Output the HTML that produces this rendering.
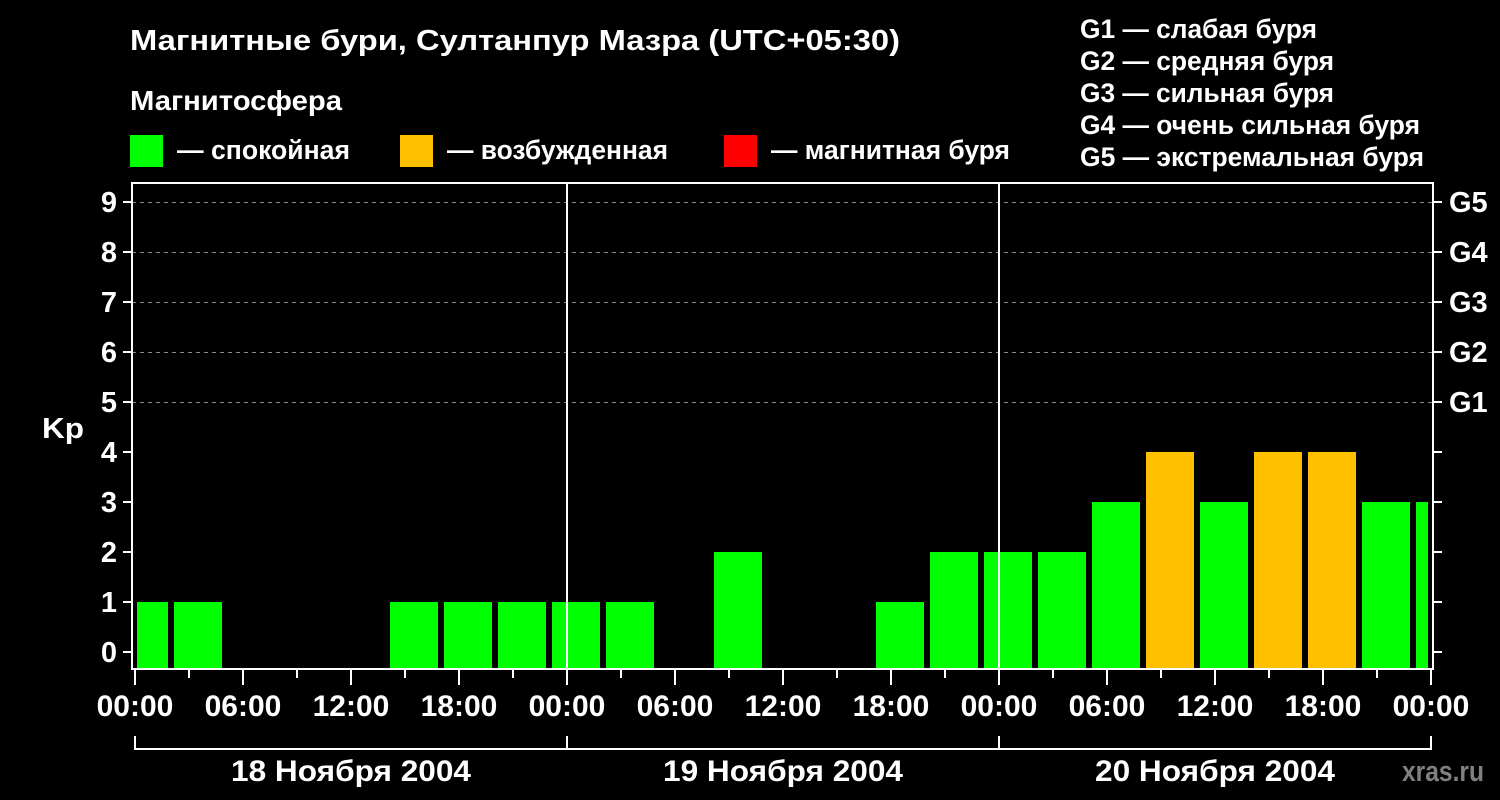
<!DOCTYPE html>
<html><head><meta charset="utf-8"><style>
html,body{margin:0;padding:0;background:#000;width:1500px;height:800px;overflow:hidden}
svg{display:block}
text{font-family:"Liberation Sans",sans-serif;font-weight:bold;fill:#fff}
</style></head><body>
<svg width="1500" height="800" viewBox="0 0 1500 800">
<rect width="1500" height="800" fill="#000"/>
<text x="130" y="50" font-size="29" textLength="770" lengthAdjust="spacingAndGlyphs">Магнитные бури, Султанпур Мазра (UTC+05:30)</text>
<text x="130" y="110" font-size="28" textLength="212" lengthAdjust="spacingAndGlyphs">Магнитосфера</text>
<rect x="130" y="135" width="33" height="32" fill="#00ff00"/>
<text x="177" y="159" font-size="27" textLength="173" lengthAdjust="spacingAndGlyphs">— спокойная</text>
<rect x="400" y="135" width="33" height="32" fill="#ffc000"/>
<text x="447" y="159" font-size="27" textLength="221" lengthAdjust="spacingAndGlyphs">— возбужденная</text>
<rect x="724" y="135" width="33" height="32" fill="#ff0000"/>
<text x="771" y="159" font-size="27" textLength="239" lengthAdjust="spacingAndGlyphs">— магнитная буря</text>
<g font-size="27" lengthAdjust="spacingAndGlyphs">
<text x="1080" y="38" textLength="237" lengthAdjust="spacingAndGlyphs">G1 — слабая буря</text>
<text x="1080" y="70" textLength="254" lengthAdjust="spacingAndGlyphs">G2 — средняя буря</text>
<text x="1080" y="102" textLength="254" lengthAdjust="spacingAndGlyphs">G3 — сильная буря</text>
<text x="1080" y="134" textLength="340" lengthAdjust="spacingAndGlyphs">G4 — очень сильная буря</text>
<text x="1080" y="166" textLength="344" lengthAdjust="spacingAndGlyphs">G5 — экстремальная буря</text>
</g>
<g stroke="#888" stroke-dasharray="4,4" stroke-width="1">
<line x1="132" y1="202.5" x2="1432" y2="202.5"/>
<line x1="132" y1="252.5" x2="1432" y2="252.5"/>
<line x1="132" y1="302.5" x2="1432" y2="302.5"/>
<line x1="132" y1="352.5" x2="1432" y2="352.5"/>
<line x1="132" y1="402.5" x2="1432" y2="402.5"/>
</g>
<g fill="#00ff00">
<rect x="137" y="602" width="31" height="66"/>
<rect x="174" y="602" width="48" height="66"/>
<rect x="390" y="602" width="48" height="66"/>
<rect x="444" y="602" width="48" height="66"/>
<rect x="498" y="602" width="48" height="66"/>
<rect x="552" y="602" width="48" height="66"/>
<rect x="606" y="602" width="48" height="66"/>
<rect x="714" y="552" width="48" height="116"/>
<rect x="876" y="602" width="48" height="66"/>
<rect x="930" y="552" width="48" height="116"/>
<rect x="984" y="552" width="48" height="116"/>
<rect x="1038" y="552" width="48" height="116"/>
<rect x="1092" y="502" width="48" height="166"/>
<rect x="1200" y="502" width="48" height="166"/>
<rect x="1362" y="502" width="48" height="166"/>
<rect x="1416" y="502" width="12" height="166"/>
</g>
<g fill="#ffc000">
<rect x="1146" y="452" width="48" height="216"/>
<rect x="1254" y="452" width="48" height="216"/>
<rect x="1308" y="452" width="48" height="216"/>
</g>
<g stroke="#fff" stroke-width="2" fill="none">
<path d="M132 183 V669 H1433 V183 Z"/>
<line x1="567" y1="183" x2="567" y2="668"/>
<line x1="999" y1="183" x2="999" y2="668"/>
<path d="M123 202H132M123 252H132M123 302H132M123 352H132M123 402H132M123 452H132M123 502H132M123 552H132M123 602H132M123 652H132"/>
<path d="M1433 202H1442M1433 252H1442M1433 302H1442M1433 352H1442M1433 402H1442M1433 452H1442M1433 502H1442M1433 552H1442M1433 602H1442M1433 652H1442"/>
<path d="M135 669V685M243 669V685M351 669V685M459 669V685M567 669V685M675 669V685M783 669V685M891 669V685M999 669V685M1107 669V685M1215 669V685M1323 669V685M1431 669V685"/>
<path d="M189 669V678M297 669V678M405 669V678M513 669V678M621 669V678M729 669V678M837 669V678M945 669V678M1053 669V678M1161 669V678M1269 669V678M1377 669V678"/>
<path d="M135 736V749H1431V736M567 736V749M999 736V749"/>
</g>
<g font-size="29" text-anchor="end">
<text x="117" y="212">9</text><text x="117" y="262">8</text><text x="117" y="312">7</text>
<text x="117" y="362">6</text><text x="117" y="412">5</text><text x="117" y="462">4</text>
<text x="117" y="512">3</text><text x="117" y="562">2</text><text x="117" y="612">1</text>
<text x="117" y="662">0</text>
</g>
<text x="42" y="438" font-size="29" textLength="42" lengthAdjust="spacingAndGlyphs">Kp</text>
<g font-size="29">
<text x="1449" y="212">G5</text><text x="1449" y="262">G4</text><text x="1449" y="312">G3</text>
<text x="1449" y="362">G2</text><text x="1449" y="412">G1</text>
</g>
<g font-size="30" text-anchor="middle">
<text x="135" y="716">00:00</text><text x="243" y="716">06:00</text><text x="351" y="716">12:00</text>
<text x="459" y="716">18:00</text><text x="567" y="716">00:00</text><text x="675" y="716">06:00</text>
<text x="783" y="716">12:00</text><text x="891" y="716">18:00</text><text x="999" y="716">00:00</text>
<text x="1107" y="716">06:00</text><text x="1215" y="716">12:00</text><text x="1323" y="716">18:00</text>
<text x="1431" y="716">00:00</text>
<text x="351" y="781" textLength="240" lengthAdjust="spacingAndGlyphs">18 Ноября 2004</text>
<text x="783" y="781" textLength="240" lengthAdjust="spacingAndGlyphs">19 Ноября 2004</text>
<text x="1215" y="781" textLength="240" lengthAdjust="spacingAndGlyphs">20 Ноября 2004</text>
</g>
<text x="1484" y="781" font-size="29" text-anchor="end" textLength="82" lengthAdjust="spacingAndGlyphs" style="fill:#808080">xras.ru</text>
</svg>
</body></html>
